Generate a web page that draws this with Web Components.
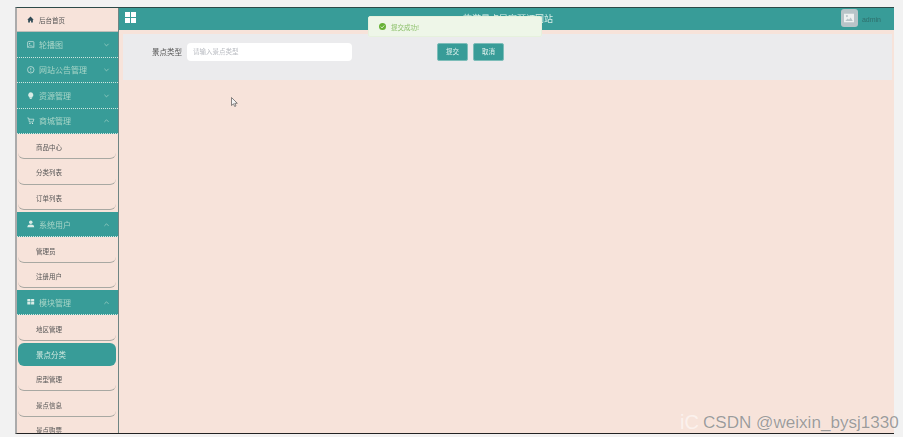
<!DOCTYPE html>
<html>
<head>
<meta charset="utf-8">
<style>
  html, body { margin: 0; height: 100%; overflow: hidden; }
  body { background: #f2f2f2; font-family: "Noto Sans CJK SC", "Liberation Sans", sans-serif; }
</style>
</head>
<body>
<admin-app>
  <side-menu slot="side">
    <home-link>后台首页</home-link>
    <menu-group icon="image" label="轮播图"></menu-group>
    <menu-group icon="info" label="网站公告管理"></menu-group>
    <menu-group icon="bulb" label="资源管理"></menu-group>
    <menu-group icon="cart" label="商城管理" open>
      <menu-item>商品中心</menu-item>
      <menu-item>分类列表</menu-item>
      <menu-item>订单列表</menu-item>
    </menu-group>
    <menu-group icon="user" label="系统用户" open>
      <menu-item>管理员</menu-item>
      <menu-item>注册用户</menu-item>
    </menu-group>
    <menu-group icon="grid" label="模块管理" open>
      <menu-item>地区管理</menu-item>
      <menu-item active>景点分类</menu-item>
      <menu-item>房型管理</menu-item>
      <menu-item>景点信息</menu-item>
      <menu-item>景点购票</menu-item>
    </menu-group>
  </side-menu>
  <top-bar slot="top" title-text="旅游景点民宿预订网站" user="admin"></top-bar>
  <type-form slot="main"></type-form>
</admin-app>
<toast-msg>提交成功!</toast-msg>
<mouse-cursor></mouse-cursor>
<water-mark></water-mark>

<script>
const ICONS = {
  image: '<rect x="1" y="1" width="10" height="10" rx="1" fill="none" stroke="currentColor" stroke-width="1.1"/><path d="M2 9.500l2.500-2.500 2 1.500 1.500-1 2 2" fill="none" stroke="currentColor"/><circle cx="4.200" cy="4.200" r="1" fill="currentColor"/>',
  info: '<circle cx="6" cy="6" r="5.200" fill="none" stroke="currentColor" stroke-width="1.100"/><path d="M6 3v4M6 8v1.200" stroke="currentColor" stroke-width="1.100"/>',
  bulb: '<path d="M6 .5a4.200 4.200 0 0 1 2.400 7.600V9H3.600v-.9A4.200 4.200 0 0 1 6 .5z" fill="currentColor"/><rect x="4.400" y="9.600" width="3.200" height="1.500" fill="currentColor"/>',
  cart: '<path d="M.5 1.500h2l1.300 6.500h5.700L11 3.500H3.200" fill="none" stroke="currentColor" stroke-width="1.100"/><circle cx="4.800" cy="10.300" r="1" fill="currentColor"/><circle cx="8.800" cy="10.300" r="1" fill="currentColor"/>',
  user: '<circle cx="6" cy="3.600" r="2.800" fill="currentColor"/><path d="M.5 11.500c0-3.500 2-4.500 5.500-4.500s5.500 1 5.500 4.500z" fill="currentColor"/>',
  grid: '<rect x=".5" y="1.500" width="5" height="4" rx=".5" fill="currentColor"/><rect x="6.500" y="1.500" width="5" height="4" rx=".5" fill="currentColor"/><rect x=".5" y="6.500" width="5" height="4" rx=".5" fill="currentColor"/><rect x="6.500" y="6.500" width="5" height="4" rx=".5" fill="currentColor"/>'
};

class AdminApp extends HTMLElement {
  constructor() {
    super();
    this.attachShadow({ mode: 'open' }).innerHTML = `
      <style>
        :host {
          display: grid;
          grid-template-columns: 102px 1fr;
          grid-template-rows: 22px 1fr;
          margin: 7px 9px 0 15px;
          height: 427px;
          box-sizing: border-box;
          border-top: 1px solid #2d4a48;
          border-bottom: 1px solid #222;
          border-left: 2px solid #ababab;
          background: #f7e3da;
          overflow: hidden;
          filter: blur(.45px);
        }
        .side { grid-row: 1 / 3; border-right: 1px solid #6f8583; overflow: hidden; box-sizing: border-box; }
        .main { padding: 4px 2px 0 4px; }
      </style>
      <div class="side"><slot name="side"></slot></div>
      <div><slot name="top"></slot></div>
      <div class="main"><slot name="main"></slot></div>`;
  }
}

class SideMenu extends HTMLElement {
  constructor() {
    super();
    this.attachShadow({ mode: 'open' }).innerHTML = `
      <style>:host { display: block; width: 101px; }</style><slot></slot>`;
  }
}

class HomeLink extends HTMLElement {
  constructor() {
    super();
    this.attachShadow({ mode: 'open' }).innerHTML = `
      <style>
        :host {
          display: flex; align-items: center; gap: 5px;
          height: 24px; padding-left: 10px; box-sizing: border-box;
          background: #f7e3da; color: #555; font-size: 6.500px;
          border-bottom: 1px solid #bdbdb8;
        }
        svg { width: 7px; height: 7px; color: #2f4a55; }
      </style>
      <svg viewBox="0 0 12 12"><path d="M6 1L.5 6.500H2V11h3V8h2v3h3V6.500h1.500z" fill="currentColor"/></svg>
      <slot></slot>`;
  }
}

class MenuGroup extends HTMLElement {
  constructor() {
    super();
    const open = this.hasAttribute('open');
    const chevron = open ? 'M2 7l3-3 3 3' : 'M2 4l3 3 3-3';
    this.attachShadow({ mode: 'open' }).innerHTML = `
      <style>
        :host { display: block; }
        .head {
          display: flex; align-items: center;
          height: 25.500px; padding: 0 8px 0 10px; box-sizing: border-box;
          background: #389c98; color: #a9d6c8; font-size: 8px;
          border-bottom: 1px dotted #cfe6e0;
        }
        .ico { width: 7.500px; height: 7.500px; margin-right: 4.500px; color: #d9ece6; flex: none; }
        .lab { flex: 1; white-space: nowrap; }
        .chev { width: 7px; height: 7px; color: #a9d6c8; }
      </style>
      <div class="head">
        <svg class="ico" viewBox="0 0 12 12">${ICONS[this.getAttribute('icon')]}</svg>
        <span class="lab">${this.getAttribute('label')}</span>
        <svg class="chev" viewBox="0 0 10 10"><path d="${chevron}" fill="none" stroke="currentColor" stroke-width="1"/></svg>
      </div>
      <slot></slot>`;
  }
}

class MenuItem extends HTMLElement {
  constructor() {
    super();
    this.attachShadow({ mode: 'open' }).innerHTML = `
      <style>
        :host {
          display: flex; align-items: center;
          height: 23.300px; margin: 2px 2px 2px 1px; padding-left: 18px;
          box-sizing: border-box;
          background: #f7e3da; color: #555; font-size: 6.500px;
          border-radius: 6px;
          border-bottom: 1.500px solid #a8a8a2;
        }
        :host([active]) { background: #389c98; color: #cfe8df; font-size: 7.500px; border-bottom: 0; }
      </style>
      <slot></slot>`;
  }
}

class TopBar extends HTMLElement {
  constructor() {
    super();
    this.attachShadow({ mode: 'open' }).innerHTML = `
      <style>
        :host {
          display: flex; align-items: center;
          height: 22px; box-sizing: border-box; background: #389c98; padding: 0 13px 2px 6px;
        }
        .grid { width: 11px; height: 11px; color: #fff; margin-bottom: 1px; }
        .title {
          flex: 1; text-align: center; color: #d8efe9; font-size: 9px; padding-left: 39px;
          white-space: nowrap;
        }
        .avatar {
          width: 17px; height: 18px; border-radius: 3px; background: #b8c4c8;
          display: flex; align-items: center; justify-content: center; margin-right: 4px;
        }
        .avatar svg { width: 10px; height: 10px; color: #eef1f1; }
        .user { color: #2f6f6c; font-size: 7px; font-family: "Liberation Sans", sans-serif; margin-top: 2px; }
      </style>
      <svg class="grid" viewBox="0 0 11 11" fill="currentColor">
        <rect width="5" height="5"/><rect x="6" width="5" height="5"/>
        <rect y="6" width="5" height="5"/><rect x="6" y="6" width="5" height="5"/>
      </svg>
      <span class="title">${this.getAttribute('title-text')}</span>
      <span class="avatar"><svg viewBox="0 0 12 12"><path fill="currentColor" fill-rule="evenodd" d="M0 1h12v10H0zM1.500 9.500h9L8 5.500 6 8 4.500 6.500zM3.500 2.500a1.200 1.200 0 1 0 .01 0z"/></svg></span>
      <span class="user">${this.getAttribute('user')}</span>`;
  }
}

class TypeForm extends HTMLElement {
  constructor() {
    super();
    this.attachShadow({ mode: 'open' }).innerHTML = `
      <style>
        :host {
          display: flex; align-items: flex-start;
          height: 46px; box-sizing: border-box; padding: 9px 0 0 29px;
          background: #ebebed;
        }
        label { color: #555; font-size: 7.500px; line-height: 17px; width: 35px; white-space: nowrap; }
        .input {
          width: 165px; height: 18px; box-sizing: border-box; margin-right: 85px;
          padding-left: 6px; line-height: 17px;
          background: #fff; border-radius: 4px; color: #b9bcc2; font-size: 6.500px;
        }
        .btn {
          width: 31px; height: 18px; margin: -.5px 5px 0 0; box-sizing: border-box;
          background: #389c98; border: 1px solid #7dbdb9; border-radius: 2px;
          color: #e3f3ef; font-size: 6.500px; text-align: center; line-height: 15px;
        }
      </style>
      <label>景点类型</label>
      <div class="input">请输入景点类型</div>
      <div class="btn">提交</div>
      <div class="btn">取消</div>`;
  }
}

class ToastMsg extends HTMLElement {
  constructor() {
    super();
    this.attachShadow({ mode: 'open' }).innerHTML = `
      <style>
        :host {
          position: absolute; left: 368px; top: 16px;
          width: 174px; height: 21px; box-sizing: border-box; padding-left: 10px;
          display: flex; align-items: center; gap: 5px;
          background: #eef6e8; border: 1px solid #e6f1dd; border-radius: 2px;
          color: #8cc06a; font-size: 6.500px; filter: blur(.35px);
        }
        svg { width: 7px; height: 7px; }
      </style>
      <svg viewBox="0 0 12 12"><circle cx="6" cy="6" r="6" fill="#67b136"/><path d="M3 6.200l2.200 2.200L9 4.200" fill="none" stroke="#eef6e8" stroke-width="1.500"/></svg>
      <slot></slot>`;
  }
}

class MouseCursor extends HTMLElement {
  constructor() {
    super();
    this.attachShadow({ mode: 'open' }).innerHTML = `
      <style>:host { position: absolute; left: 231px; top: 88px; width: 7px; height: 10px; display: block; }</style>
      <svg width="7" height="10" viewBox="0 0 7 10"><path d="M.5.500v8l2-1.700 1.200 2.700 1.300-.6L3.800 6.300H6.300z" fill="#f4f4f4" stroke="#555" stroke-width=".7"/></svg>`;
  }
}

class WaterMark extends HTMLElement {
  constructor() {
    super();
    this.attachShadow({ mode: 'open' }).innerHTML = `
      <style>
        :host {
          position: absolute; left: 680px; top: 411px; display: flex; align-items: center; gap: 4px;
          font-family: "Liberation Sans", sans-serif; white-space: nowrap;
        }
        .ghost { font-size: 20px; line-height: 23px; color: rgba(255,255,255,.55); }
        .mark {
          font-size: 17.100px; line-height: 20px;
          color: rgba(125,125,125,.75); text-shadow: 0 0 1px rgba(255,255,255,.8);
        }
      </style>
      <span class="ghost">iC</span>
      <span class="mark">CSDN @weixin_bysj1330</span>`;
  }
}

customElements.define('admin-app', AdminApp);
customElements.define('side-menu', SideMenu);
customElements.define('home-link', HomeLink);
customElements.define('menu-group', MenuGroup);
customElements.define('menu-item', MenuItem);
customElements.define('top-bar', TopBar);
customElements.define('type-form', TypeForm);
customElements.define('toast-msg', ToastMsg);
customElements.define('mouse-cursor', MouseCursor);
customElements.define('water-mark', WaterMark);
</script>
</body>
</html>
